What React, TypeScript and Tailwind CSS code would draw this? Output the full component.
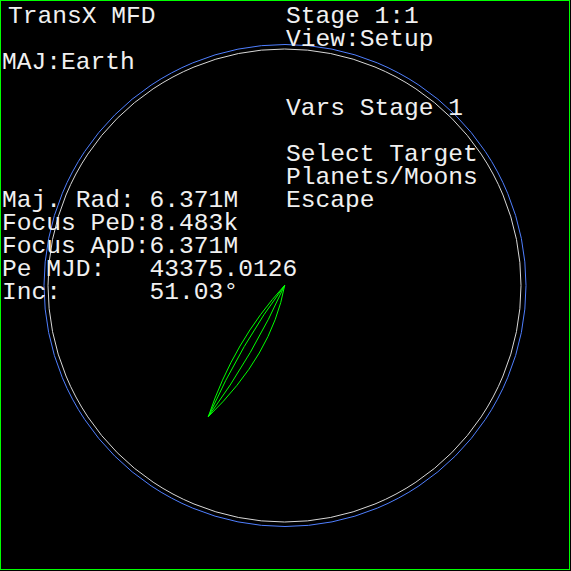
import React from "react"

const left = [
  { row: 0, text: "TransX MFD", indent: true },
  { row: 2, text: "MAJ:Earth" },
  { row: 8, text: "Maj. Rad: 6.371M" },
  { row: 9, text: "Focus PeD:8.483k" },
  { row: 10, text: "Focus ApD:6.371M" },
  { row: 11, text: "Pe MJD:   43375.0126" },
  { row: 12, text: "Inc:      51.03°" },
]

const right = [
  { row: 0, text: "Stage 1:1" },
  { row: 1, text: "View:Setup" },
  { row: 4, text: "Vars Stage 1" },
  { row: 6, text: "Select Target" },
  { row: 7, text: "Planets/Moons" },
  { row: 8, text: "Escape" },
]

function Column({ lines }: { lines: { row: number; text: string; indent?: boolean }[] }) {
  const rows = Array.from({ length: 13 }, (_, i) => lines.find((l) => l.row === i))
  return (
    <div className="flex flex-col">
      {rows.map((l, i) => (
        <div key={i} className={`h-[23px] whitespace-pre ${l?.indent ? "pl-[6px]" : ""}`}>
          {l ? l.text : ""}
        </div>
      ))}
    </div>
  )
}

export default function App() {
  return (
    <div className="w-[571px] h-[571px] bg-black">
      <div className="relative w-[570px] h-[570px] border border-[#00ff00] bg-black overflow-hidden">
        {/* orbit display */}
        <svg className="absolute left-[-1px] top-[-1px]" width="571" height="571" viewBox="0 0 571 571">
          <circle cx="285" cy="285.5" r="241" fill="none" stroke="#4f7fff" strokeWidth="1" />
          <circle cx="284.5" cy="285.5" r="236.5" fill="none" stroke="#d8d8d8" strokeWidth="1" />
          <g fill="none" stroke="#00ff00" strokeWidth="1">
            <path d="M208.3 416.7 Q233.5 341 284.7 285.3 Q272 355 208.3 416.7 Z" />
            <path d="M208.3 416.7 Q242 342 284.7 285.3 Q254 354 208.3 416.7 Z" />
          </g>
        </svg>

        <div className="relative grid grid-cols-[284px_1fr] pt-[4px] pl-[1px] text-[24.6px] leading-[23px] text-[#f0f0f0] font-['Liberation_Mono',monospace]">
          <Column lines={left} />
          <Column lines={right} />
        </div>
      </div>
    </div>
  )
}
